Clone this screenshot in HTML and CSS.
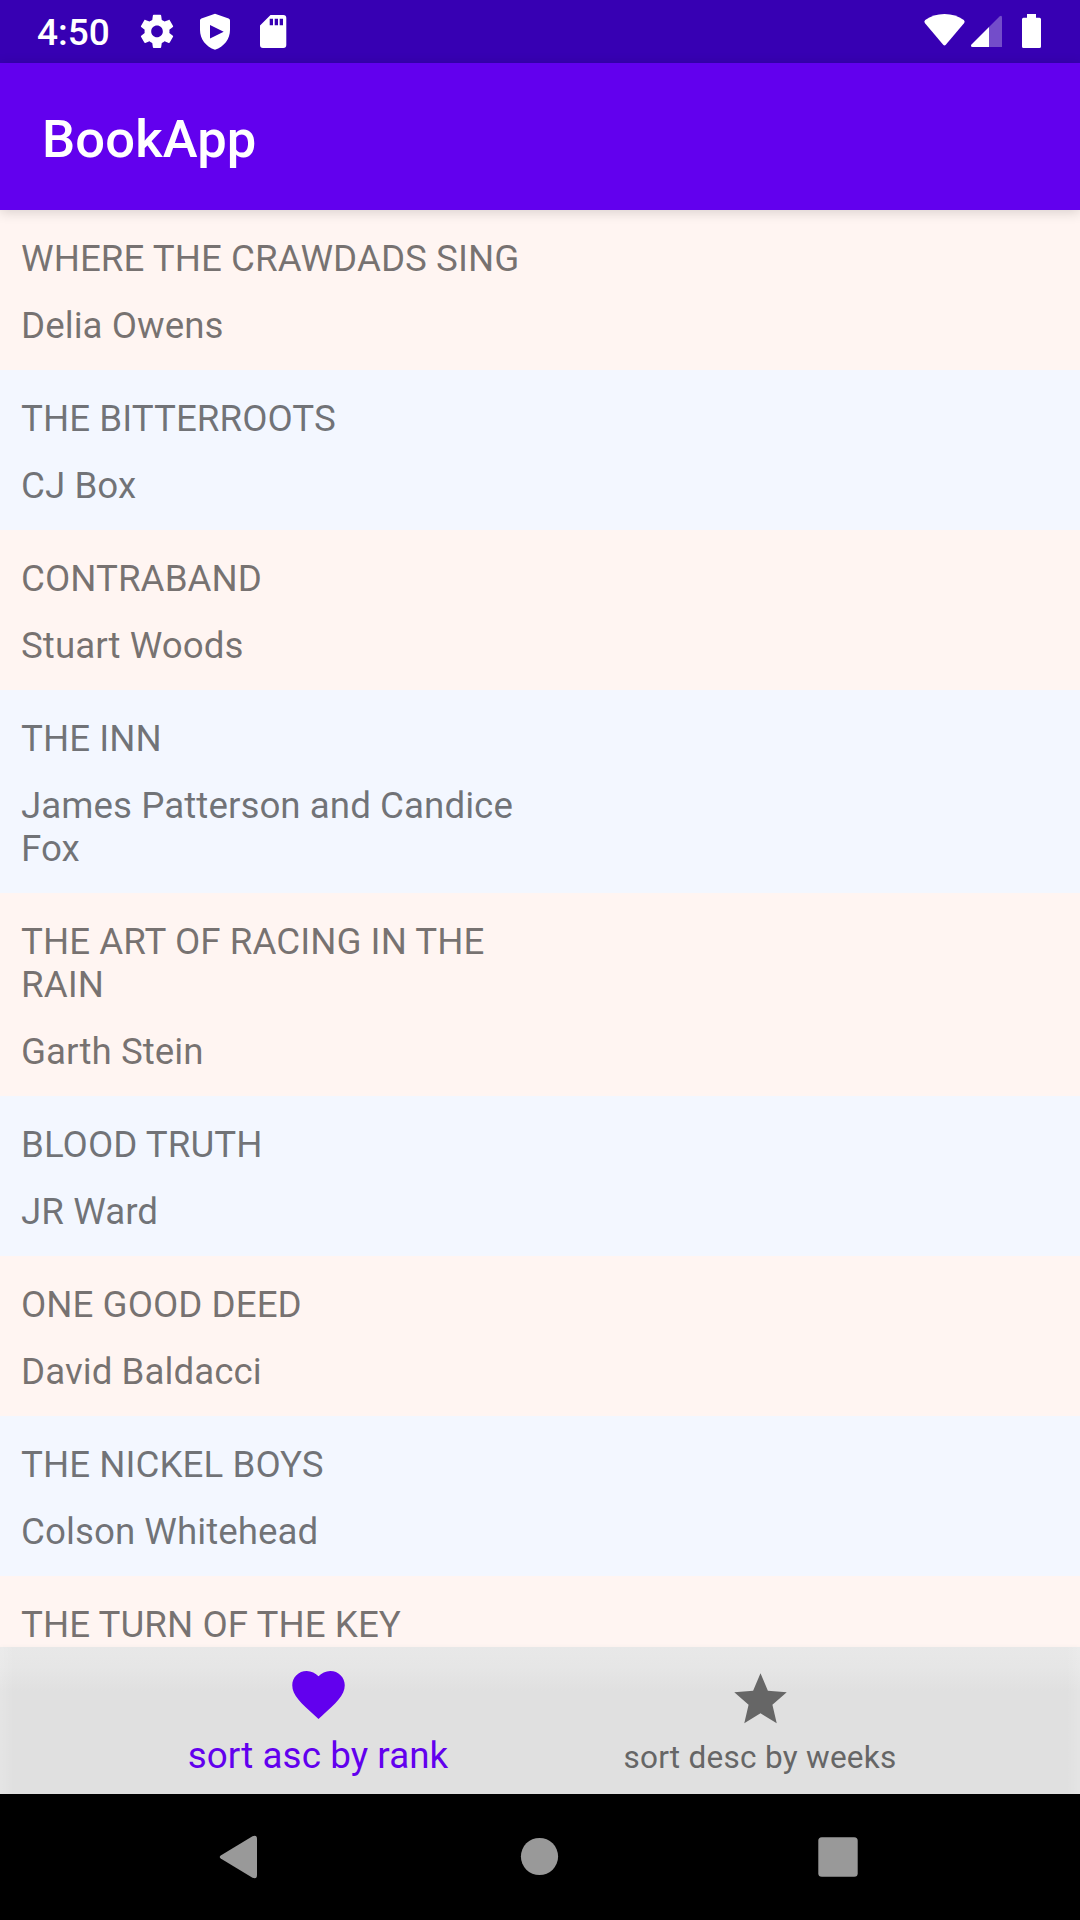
FILE: index.html
```html
<!DOCTYPE html>
<html lang="en">
<head>
<meta charset="utf-8">
<title>BookApp</title>
<link rel="stylesheet" href="styles.css">
</head>
<body>
<div class="screen">
  <div class="status-bar">
    <span class="clock">4:50</span>
    <svg class="status-left" width="150" height="63" viewBox="140 0 150 63">
      <g transform="translate(137.1 11.5) scale(1.66)"><path fill="#fff" d="M19.43 12.98c.04-.32.07-.64.07-.98s-.03-.66-.07-.98l2.11-1.65c.19-.15.24-.42.12-.64l-2-3.46c-.12-.22-.39-.3-.61-.22l-2.49 1c-.52-.4-1.08-.73-1.69-.98l-.38-2.65C14.46 2.18 14.25 2 14 2h-4c-.25 0-.46.18-.49.42l-.38 2.65c-.61.25-1.17.59-1.69.98l-2.49-1c-.23-.09-.49 0-.61.22l-2 3.46c-.13.22-.07.49.12.64l2.11 1.65c-.04.32-.07.65-.07.98s.03.66.07.98l-2.11 1.65c-.19.15-.24.42-.12.64l2 3.46c.12.22.39.3.61.22l2.49-1c.52.4 1.08.73 1.69.98l.38 2.65c.03.24.24.42.49.42h4c.25 0 .46-.18.49-.42l.38-2.65c.61-.25 1.17-.59 1.69-.98l2.49 1c.23.09.49 0 .61-.22l2-3.46c.12-.22.07-.49-.12-.64l-2.11-1.65zM12 15.5c-1.93 0-3.5-1.57-3.5-3.5s1.57-3.5 3.5-3.5 3.5 1.57 3.5 3.5-1.57 3.5-3.5 3.5z"/></g>
      <path fill="#fff" fill-rule="evenodd" d="M215 13.7L228.600 18.500Q230 19 230 20.500V30C230 39 224 46.800 215 49.700C206 46.800 200 39 200 30V20.500Q200 19 201.400 18.500ZM210 25V38.500L223.700 31.700Z"/>
      <path fill="#fff" fill-rule="evenodd" d="M270.500 15H283.300Q286.300 15 286.300 18V45Q286.300 48 283.300 48H263Q260 48 260 45V25.500ZM269.700 18.700V25.300H273V18.700ZM274.700 18.700V25.300H278V18.700ZM279.700 18.700V25.300H283V18.700Z"/>
    </svg>
    <svg class="status-right" width="122" height="63" viewBox="922 0 122 63">
      <path fill="#fff" d="M944.500 14C952 14 958.500 16.200 963.800 20Q965.300 21.300 964.200 23L945.800 44.800Q944.500 46.200 943.200 44.800L924.800 23Q923.700 21.300 925.200 20C930.500 16.200 937 14 944.500 14Z"/>
      <path fill="#fff" fill-opacity=".3" d="M989 27L999.500 16.500Q1002 14.800 1002 17.500V47H989Z"/>
      <path fill="#fff" d="M989 27V47H972.500Q970 46.500 971.500 44.500Z"/>
      <path fill="#fff" d="M1027 14H1036V17.700H1039.500Q1041 17.700 1041 19.200V46.500Q1041 48 1039.500 48H1023.500Q1022 48 1022 46.500V19.200Q1022 17.700 1023.500 17.700H1027Z"/>
    </svg>
  </div>
  <header class="app-bar"><h1 class="app-title">BookApp</h1></header>
  <main class="book-list">
    <article class="book"><p class="line">WHERE THE CRAWDADS SING</p><p class="line">Delia Owens</p></article>
    <article class="book"><p class="line">THE BITTERROOTS</p><p class="line">CJ Box</p></article>
    <article class="book"><p class="line">CONTRABAND</p><p class="line">Stuart Woods</p></article>
    <article class="book"><p class="line">THE INN</p><p class="line">James Patterson and Candice Fox</p></article>
    <article class="book"><p class="line">THE ART OF RACING IN THE RAIN</p><p class="line">Garth Stein</p></article>
    <article class="book"><p class="line">BLOOD TRUTH</p><p class="line">JR Ward</p></article>
    <article class="book"><p class="line">ONE GOOD DEED</p><p class="line">David Baldacci</p></article>
    <article class="book"><p class="line">THE NICKEL BOYS</p><p class="line">Colson Whitehead</p></article>
    <article class="book"><p class="line">THE TURN OF THE KEY</p></article>
  </main>
  <nav class="bottom-nav">
    <a class="tab tab-active">
      <svg width="63" height="63" viewBox="0 0 24 24"><path fill="currentColor" d="M12 21.35l-1.45-1.32C5.4 15.36 2 12.28 2 8.5 2 5.42 4.42 3 7.5 3c1.74 0 3.41.81 4.5 2.09C13.09 3.81 14.76 3 16.5 3 19.58 3 22 5.42 22 8.500c0 3.780-3.400 6.860-8.550 11.540L12 21.350z"/></svg>
      <span class="tab-label">sort asc by rank</span>
    </a>
    <a class="tab">
      <svg width="63" height="63" viewBox="0 0 24 24"><path fill="currentColor" d="M12 17.270L18.180 21l-1.640-7.030L22 9.240l-7.190-.61L12 2 9.190 8.630 2 9.240l5.460 4.730L5.820 21z"/></svg>
      <span class="tab-label">sort desc by weeks</span>
    </a>
  </nav>
  <div class="system-nav">
    <svg width="1080" height="126" viewBox="0 1794 1080 126" fill="#999">
      <path d="M220.700 1855.500L252.500 1836.200Q257 1834.500 257 1839V1875Q257 1879.500 252.500 1877.800L220.700 1858.500Q218.800 1857 220.700 1855.500Z"/>
      <circle cx="539.500" cy="1856.500" r="18.600"/>
      <rect x="818.300" y="1837.300" width="39.400" height="39.400" rx="3.500"/>
    </svg>
  </div>
</div>
</body>
</html>
```
FILE: styles.css
```css
* {
  box-sizing: border-box;
}

body {
  margin: 0;
  font-family: Roboto, sans-serif;
}

h1,
p {
  margin: 0;
}

svg {
  display: block;
  flex: none;
}

.screen {
  display: flex;
  flex-direction: column;
  width: 1080px;
  height: 1920px;
  overflow: hidden;
}

.status-bar {
  display: flex;
  flex: none;
  height: 63px;
  padding: 0 36px 0 37px;
  background: #3700b3;
  color: #fff;
}

.clock {
  width: 103px;
  font-size: 37px;
  font-weight: 500;
  line-height: 66px;
}

.status-right {
  margin-left: auto;
}

.app-bar {
  z-index: 1;
  display: flex;
  flex: none;
  align-items: center;
  height: 147px;
  padding: 4px 42px 0;
  background: #6200ee;
  box-shadow: 0 2px 12px rgba(0, 0, 0, 0.16);
  color: #fff;
}

.app-title {
  font-size: 52.5px;
  font-weight: 500;
  letter-spacing: 0.15px;
  line-height: 62px;
}

.book-list {
  flex: none;
  height: 1437px;
  overflow: hidden;
}

.book {
  display: flex;
  flex-direction: column;
  gap: 24px;
  padding: 27px 21px 23px;
  background: #f3f7ff;
}

.book:nth-child(odd) {
  background: #fff5f2;
}

.line {
  width: 508px;
  color: rgba(0, 0, 0, 0.54);
  font-size: 36.75px;
  letter-spacing: 0.03px;
  line-height: 43px;
}

.bottom-nav {
  z-index: 1;
  display: flex;
  flex: none;
  justify-content: center;
  height: 147px;
  background:
    linear-gradient(90deg, rgba(255, 255, 255, 0.15), transparent 14px, transparent 1066px, rgba(255, 255, 255, 0.15)),
    linear-gradient(#e8e8e8, #e6e6e6 20px, #e0e0e0 44px);
  box-shadow: 0 0 5px rgba(0, 0, 0, 0.03);
}

.tab {
  display: flex;
  flex-direction: column;
  align-items: center;
  width: 441px;
  padding: 21px 1px 0 0;
  color: #666;
}

.tab-active {
  padding: 16px 3px 0 0;
  color: #6200ee;
}

.tab-label {
  margin-top: 8px;
  font-size: 31.5px;
  letter-spacing: 0.27px;
  line-height: 37px;
}

.tab-active .tab-label {
  font-size: 36.75px;
  letter-spacing: 0.08px;
  line-height: 43px;
}

.system-nav {
  flex: none;
  height: 126px;
  background: #000;
}
```
